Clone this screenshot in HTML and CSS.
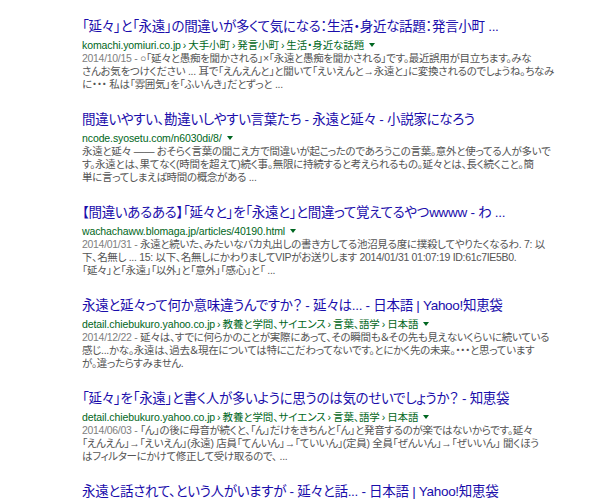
FILE: index.html
```html
<!DOCTYPE html>
<html lang="ja">
<head>
<meta charset="utf-8">
<title>検索結果</title>
<link rel="stylesheet" href="styles.css">
</head>
<body>
<div class="results">
  <div class="result">
    <a class="title" href="#">「延々」と「永遠」の間違いが多くて気になる：生活・身近な話題：発言小町 ...</a>
    <div class="url">komachi.yomiuri.co.jp <span class="sep">›</span> 大手小町 <span class="sep">›</span> 発言小町 <span class="sep">›</span> 生活・身近な話題 <span class="arrow"></span></div>
    <div class="snippet">
      <div class="line"><span class="date">2014/10/15 - </span>○「延々と愚痴を聞かされる」×「永遠と愚痴を聞かされる」です。最近誤用が目立ちます。みな</div>
      <div class="line">さんお気をつけください ... 耳で「えんえんと」と聞いて「えいえんと→永遠と」に変換されるのでしょうね。ちなみ</div>
      <div class="line">に・・・ 私は「雰囲気」を「ふいんき」だとずっと ...</div>
    </div>
  </div>
  <div class="result">
    <a class="title" href="#">間違いやすい、勘違いしやすい言葉たち - 永遠と延々 - 小説家になろう</a>
    <div class="url">ncode.syosetu.com/n6030di/8/ <span class="arrow"></span></div>
    <div class="snippet">
      <div class="line">永遠と延々 —— おそらく言葉の聞こえ方で間違いが起こったのであろうこの言葉。意外と使ってる人が多いで</div>
      <div class="line">す。永遠とは、果てなく(時間を超えて)続く事。無限に持続すると考えられるもの。延々とは、長く続くこと。簡</div>
      <div class="line">単に言ってしまえば時間の概念がある ...</div>
    </div>
  </div>
  <div class="result">
    <a class="title" href="#">【間違いあるある】「延々と」を「永遠と」と間違って覚えてるやつwwww - わ ...</a>
    <div class="url">wachachaww.blomaga.jp/articles/40190.html <span class="arrow"></span></div>
    <div class="snippet">
      <div class="line"><span class="date">2014/01/31 - </span>永遠と続いた、みたいなバカ丸出しの書き方してる池沼見る度に撲殺してやりたくなるわ. 7: 以</div>
      <div class="line">下、名無し ... 15: 以下、名無しにかわりましてVIPがお送りします 2014/01/31 01:07:19 ID:61c7IE5B0.</div>
      <div class="line">「延々」と「永遠」「以外」と「意外」「感心」と「 ...</div>
    </div>
  </div>
  <div class="result">
    <a class="title" href="#">永遠と延々って何か意味違うんですか？ - 延々は... - 日本語 | Yahoo!知恵袋</a>
    <div class="url">detail.chiebukuro.yahoo.co.jp <span class="sep">›</span> 教養と学問、サイエンス <span class="sep">›</span> 言葉、語学 <span class="sep">›</span> 日本語 <span class="arrow"></span></div>
    <div class="snippet">
      <div class="line"><span class="date">2014/12/22 - </span>延々は、すでに何らかのことが実際にあって、その瞬間も＆その先も見えないくらいに続いている</div>
      <div class="line">感じ...かな。永遠は、過去＆現在については特にこだわってないです。とにかく先の未来。・・・と思っています</div>
      <div class="line">が。違ったらすみません.</div>
    </div>
  </div>
  <div class="result">
    <a class="title" href="#">「延々」を「永遠」と書く人が多いように思うのは気のせいでしょうか？ - 知恵袋</a>
    <div class="url">detail.chiebukuro.yahoo.co.jp <span class="sep">›</span> 教養と学問、サイエンス <span class="sep">›</span> 言葉、語学 <span class="sep">›</span> 日本語 <span class="arrow"></span></div>
    <div class="snippet">
      <div class="line"><span class="date">2014/06/03 - </span>「ん」の後に母音が続くと、「ん」だけをきちんと「ん」と発音するのが楽ではないからです。延々</div>
      <div class="line">「えんえん」→「えいえん」(永遠) 店員「てんいん」→「ていいん」(定員) 全員「ぜんいん」→「ぜいいん」 聞くほう</div>
      <div class="line">はフィルターにかけて修正して受け取るので、 ...</div>
    </div>
  </div>
  <div class="result">
    <a class="title" href="#">永遠と話されて、という人がいますが - 延々と話... - 日本語 | Yahoo!知恵袋</a>
    <div class="url">detail.chiebukuro.yahoo.co.jp <span class="sep">›</span> 教養と学問、サイエンス <span class="sep">›</span> 言葉、語学 <span class="sep">›</span> 日本語 <span class="arrow"></span></div>
  </div>
</div>
</body>
</html>
```

FILE: styles.css
```css
html, body {
  margin: 0;
  padding: 0;
  background: #ffffff;
  overflow: hidden;
}

body {
  font-family: "Liberation Sans", "Noto Sans CJK JP", sans-serif;
  font-feature-settings: "palt";
}

.results {
  display: flex;
  flex-direction: column;
  padding: 17px 0 0 82px;
}

.result {
  display: flex;
  flex-direction: column;
  margin-bottom: 19px;
}

.title {
  font-size: 13.5px;
  line-height: 20px;
  letter-spacing: -0.3px;
  color: #1a0dab;
  text-decoration: none;
  white-space: nowrap;
}

.url {
  margin-top: 1px;
  font-size: 10.5px;
  line-height: 14px;
  letter-spacing: -0.1px;
  color: #006621;
  white-space: nowrap;
  display: flex;
  align-items: center;
}

.url .sep {
  margin: 0 2px;
  color: #006621;
}

.arrow {
  display: inline-block;
  width: 0;
  height: 0;
  margin-left: 5px;
  border-top: 4px solid #006621;
  border-left: 3px solid transparent;
  border-right: 3px solid transparent;
}

.snippet {
  font-size: 10.5px;
  line-height: 13px;
  letter-spacing: -0.3px;
  color: #545454;
}

.line {
  white-space: nowrap;
}

.date {
  color: #808080;
}
```
